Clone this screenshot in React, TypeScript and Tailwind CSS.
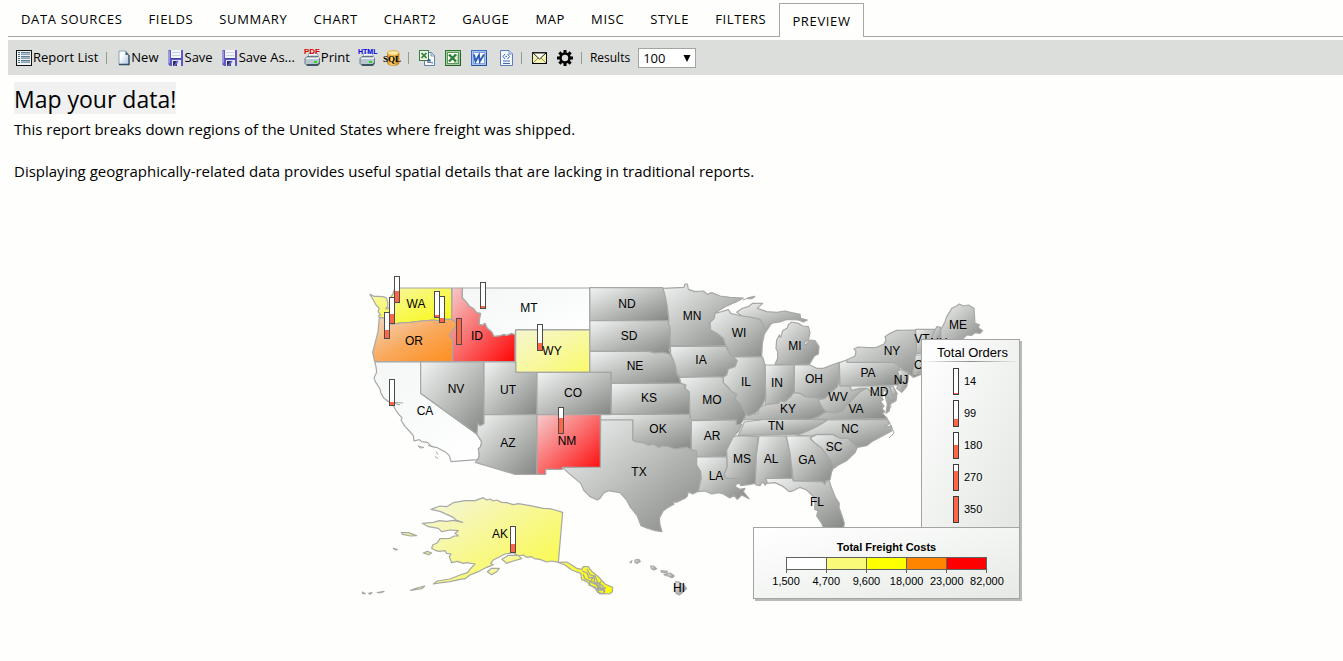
import React from "react";

const tabs = ["DATA SOURCES", "FIELDS", "SUMMARY", "CHART", "CHART2", "GAUGE", "MAP", "MISC", "STYLE", "FILTERS"];

type Shape = { id: string; d: string; fill?: string };

/* Each group of outlines is drawn on its own grid, three units to a pixel. */
const west: Shape[] = [
  { id: "WA", fill: "yellow", d: "M60,88 L72,94 L85,94 L98,95 L108,98 L112,106 L114,120 L108,132 L118,128 L126,112 L120,100 L128,88 L135,69 H305 V163 L282,163 L262,167 L250,165 L215,168 L180,172 L150,174 L125,178 L118,172 L112,160 L88,158 L86,152 L92,150 L84,140 L88,130 L78,120 L70,105Z" },
  { id: "OR", fill: "orange", d: "M88,158 L112,160 L118,172 L125,178 L150,174 L180,172 L215,168 L250,165 L262,167 L282,163 H305 L318,172 L320,182 L300,208 L300,214 L308,222 L307,290 H74 L68,262 L75,235 L84,200Z" },
  { id: "ID", fill: "red", d: "M306,69 H337 V98 L350,112 L357,122 L372,132 L380,143 L392,145 L388,166 L388,178 L397,180 L405,175 L412,190 L425,200 L432,214 L450,212 L462,208 L470,211 L485,205 L495,210 V290 H307 L308,222 L300,214 L300,208 L320,182 L318,172 L305,163Z" },
  { id: "MT", fill: "white", d: "M337,69 H719 V194 H497 L495,210 L485,205 L470,211 L462,208 L450,212 L432,214 L425,200 L412,190 L405,175 L397,180 L388,178 L388,166 L392,145 L380,143 L372,132 L357,122 L350,112 L337,98Z" },
  { id: "WY", fill: "paleYellow", d: "M497,195 H719 V322 H497Z" },
  { id: "CA", fill: "white", d: "M74,290 L212,291 V385 L381,508 L395,530 L392,545 L385,552 L388,572 L383,584 L303,590 L298,572 L285,560 L262,548 L245,545 L232,532 L215,530 L208,524 L192,528 L190,512 L178,498 L165,484 L153,465 L156,458 L148,450 L140,440 L132,425 L118,412 L102,400 L93,385 L90,372 L76,350 L72,338 L80,322 L78,305Z" },
  { id: "NV", d: "M212,291 H402 V476 L390,482 L383,476 L381,508 L212,385Z" },
  { id: "UT", d: "M402,291 H497 V322 H561 V449 H402Z" },
  { id: "CO", d: "M561,322 H783 V449 H561Z" },
  { id: "AZ", d: "M402,449 H561 V628 H495 L376,592 L383,584 L388,572 L385,552 L392,545 L395,530 L381,508 L383,476 L390,482 L402,476Z" },
  { id: "NM", fill: "red", d: "M561,449 H751 V606 L637,607 V613 H587 V628 H561Z" },
];

const middle: Shape[] = [
  { id: "ND", d: "M29,53 H248 L252,65 L258,90 L262,110 L267,152 H29Z" },
  { id: "SD", d: "M29,152 H267 L265,160 L270,170 V228 L267,240 L272,253 L250,247 L225,249 L205,244 H29Z" },
  { id: "NE", d: "M29,244 H205 L225,249 L250,247 L272,254 L280,270 L287,290 L290,310 L298,325 L303,340 H94 V307 H29Z" },
  { id: "KS", d: "M94,340 H303 L318,345 L313,352 L328,366 L330,433 H94Z" },
  { id: "OK", d: "M62,433 H330 V450 L334,480 V539 L320,532 L300,535 L285,537 L265,530 L248,528 L235,532 L220,522 L205,526 L190,518 L170,516 L158,510 V450 H62Z" },
  { id: "TX", d: "M62,450 H158 V510 L170,516 L190,518 L205,526 L220,522 L235,532 L248,528 L265,530 L285,537 L300,535 L320,532 L334,539 L350,543 V585 L362,605 L364,625 L360,640 L355,664 L338,672 L330,668 L325,665 L322,678 L315,685 L290,697 L280,695 L282,703 L265,712 L250,722 L238,745 L240,765 L246,785 L225,782 L200,774 L183,767 L172,738 L150,710 L140,690 L120,668 L85,662 L70,670 L60,685 L52,690 L30,680 L12,662 L2,640 L-12,628 L-30,613 L-53,592 L61,591Z" },
  { id: "MN", d: "M248,55 L312,52 L315,42 L322,42 L325,58 L345,65 L370,63 L382,73 L395,68 L420,78 L450,82 L490,84 L470,95 L440,108 L415,122 L405,130 L403,145 L390,158 L392,180 L410,190 L430,205 L438,227 H271 L270,170 L265,160 L267,152 L262,110 L258,90 L252,65Z" },
  { id: "WI", d: "M405,130 L425,125 L445,119 L452,130 L485,138 L515,142 L540,148 L550,165 L552,175 L542,192 L570,166 L553,192 L547,220 L545,260 L460,261 L448,252 L438,227 L430,205 L410,190 L392,180 L390,158 L403,145Z" },
  { id: "IA", d: "M271,229 H438 L448,250 L458,262 L472,272 L465,290 L445,297 L440,315 L430,322 L415,320 L300,323 L298,320 L290,310 L287,290 L280,270 L272,253Z" },
  { id: "MO", d: "M298,322 L415,320 L430,322 L430,338 L445,352 L455,365 L470,372 L465,388 L480,400 L492,420 L498,432 L490,450 L480,465 L468,463 L470,450 H334 L330,433 L328,366 L315,355 L318,345 L303,340Z" },
  { id: "IL", d: "M460,261 H548 L555,285 L557,380 L550,400 L535,420 L525,430 L505,437 L498,430 L480,400 L465,388 L470,372 L455,365 L445,352 L430,338 V322 L440,315 L445,297 L465,290 L472,272Z" },
  { id: "AR", d: "M334,452 L470,450 L468,463 L485,464 L475,485 L460,500 L450,520 L440,540 L442,560 L350,561 V543 L334,539Z" },
  { id: "LA", d: "M350,561 L440,560 L442,590 L432,615 L440,625 H480 L482,642 L470,640 L466,650 L480,658 L495,655 L490,665 L507,686 L485,675 L472,688 L462,676 L450,684 L430,672 L415,668 L395,672 L375,663 L355,665 L360,640 L364,625 L362,605 L350,585Z" },
  { id: "MS", d: "M475,497 L535,500 L528,560 L526,640 L510,643 L482,647 L480,625 H440 L432,615 L442,590 L440,540 L450,520 L460,500Z" },
];

const east: Shape[] = [
  { id: "MI-upper", d: "M-40,97 L-25,86 L-5,80 L8,70 L38,70 L22,85 L50,95 L80,97 L105,93 L125,98 L150,103 L152,115 L172,120 L160,126 L145,120 L110,118 L90,126 L70,128 L58,135 L45,152 L36,128 L5,114 L-25,108Z" },
  { id: "Isle-Royale", d: "M-8,55 L2,52 L14,49 L5,56Z" },
  { id: "MI", d: "M75,253 L83,235 V215 L78,205 L80,180 L88,165 L92,172 L98,152 L112,144 L115,134 L125,126 L145,130 L158,138 L175,140 L180,158 L175,180 L163,188 L165,197 L180,180 L195,182 L207,200 L205,222 L193,228 L183,245 L178,253Z" },
  { id: "IN", d: "M45,255 H133 V340 L122,350 L105,365 L85,370 L45,375 L47,355Z" },
  { id: "OH", d: "M133,255 H180 L200,265 L220,265 L245,255 L268,247 V300 L262,320 L240,340 L225,355 H205 L185,352 L165,350 L150,340 H133Z" },
  { id: "KY", d: "M-18,420 L-15,408 L0,400 L22,402 L28,382 L45,375 L62,372 L85,370 L92,362 L105,365 L122,350 L130,338 L150,340 L165,350 L185,352 L205,355 L210,375 L228,395 L205,410 L190,417Z" },
  { id: "VA", d: "M180,418 L205,410 L228,395 L255,398 L278,392 L290,375 L310,355 L330,335 L350,325 L370,340 L385,345 L400,358 L392,365 L402,378 L396,385 L404,395 L398,400 L412,416Z" },
  { id: "WV", d: "M268,300 L270,318 H300 L305,332 L330,322 L350,322 L330,335 L310,355 L290,375 L278,392 L255,398 L228,395 L215,380 L205,360 L225,355 L240,340 L262,320Z" },
  { id: "PA", d: "M268,248 L290,240 L292,247 H430 L440,250 L450,262 L443,275 L447,290 L455,300 L445,315 L270,318Z" },
  { id: "MD", d: "M300,318 H420 L428,350 L440,347 L438,362 L420,372 L418,392 L408,400 L412,372 L405,345 L410,335 L400,330 L398,350 L385,345 L370,340 L350,325 L330,325 L305,332Z" },
  { id: "DE", d: "M420,318 L430,320 L442,342 L428,350Z" },
  { id: "NY", d: "M292,247 L290,240 L315,228 L318,215 L312,207 L325,201 L355,203 L380,202 L402,192 L408,180 L405,170 L420,160 L440,151 L497,150 L500,210 L496,240 L492,275 L486,285 L535,274 L490,292 L475,280 L450,262 L440,250 L430,247Z" },
  { id: "NJ", d: "M450,268 L475,276 V295 L470,320 L455,337 L440,325 L445,315 L455,300 L447,290 L443,275Z" },
  { id: "VT", d: "M497,148 H557 L545,180 L540,220 H500Z" },
  { id: "CT", d: "M496,225 H545 V272 L488,280 L492,260Z" },
  { id: "NH", d: "M555,150 L561,140 L572,142 L573,185 L540,190Z" },
  { id: "ME", d: "M572,150 L585,125 L590,110 L600,95 L605,85 L620,78 L628,72 L640,78 L655,75 L672,85 L675,130 L688,134 L685,143 L698,152 L690,160 L675,158 L665,166 L650,165 L630,185 H573Z" },
];

const south: Shape[] = [
  { id: "TN", d: "M145,106 L155,85 L163,66 L210,60 V57 L412,59 L400,68 L380,80 L355,92 L330,104Z" },
  { id: "NC", d: "M320,106 L355,92 L380,80 L400,68 L412,60 L592,58 L600,70 L585,78 L602,80 L604,94 L588,102 L570,112 L545,125 L530,137 L502,142 L473,114 L455,116 L440,110 L430,103 L380,103 L365,108Z" },
  { id: "SC", d: "M360,114 L380,104 H430 L440,110 L455,116 L473,114 L502,142 L495,158 L470,182 L445,195 L432,205 L410,165 L395,145 L375,130Z" },
  { id: "AL", d: "M207,108 H289 L300,160 L305,200 L307,235 H228 L232,248 L225,255 L218,245 L210,257 L198,255 L196,250 L198,170Z" },
  { id: "GA", d: "M289,108 H365 L360,115 L375,130 L395,145 L410,165 L425,185 L432,200 L425,215 L420,240 L408,242 L405,252 L398,245 L310,241 L305,200 L300,160Z" },
  { id: "FL", d: "M228,235 H307 L310,243 L398,246 L405,254 L408,242 L418,243 L425,265 L436,292 L448,310 L447,322 L457,350 L463,370 L460,388 H402 L395,370 L380,348 L384,332 L374,328 L375,310 L370,290 L350,270 L330,262 L310,272 L298,275 L280,260 L255,248 L232,250Z" },
];

const alaska: Shape[] = [
  { id: "AK", fill: "alaska", d: "M375,62 L400,53 L410,60 L420,57 L430,63 L440,60 L455,67 L470,68 L490,74 L505,71 L540,77 L580,85 L600,86 L615,90 L638,97 L625,247 L605,243 L590,246 L570,238 L552,236 L545,230 L530,232 L520,225 L505,228 L490,218 L465,222 L440,235 L430,240 L422,250 L430,254 L410,262 L385,275 L360,285 L345,296 L330,298 L300,305 L275,308 L250,312 L262,303 L300,297 L330,285 L352,278 L365,262 L375,252 L350,248 L340,250 L322,244 L305,248 L298,230 L303,222 L290,220 L285,212 L268,214 L258,212 L245,205 L248,195 L262,188 L270,176 L300,175 L312,168 L325,168 L315,160 L325,152 L300,150 L275,155 L265,145 L235,140 L217,130 L250,127 L268,122 L290,124 L310,121 L338,127 L318,120 L310,112 L290,103 L270,94 L243,88 L270,78 L290,80 L310,68 L345,62Z" },
  { id: "AK-kenai", fill: "alaska", d: "M465,245 L456,238 L475,226 L505,226 L515,236 L490,243 L470,250Z" },
  { id: "AK-kodiak", fill: "alaska", d: "M412,275 L425,265 L448,265 L440,275 L425,284Z" },
  { id: "AK-nunivak", fill: "alaska", d: "M220,219 L232,214 L245,219 L236,224Z" },
  { id: "AK-lawrence", fill: "alaska", d: "M154,158 L175,158 L200,167 L182,168 L158,163Z" },
  { id: "AK-unimak", fill: "alaska", d: "M182,331 L200,324 L224,318 L216,326 L200,328Z" },
  { id: "AK-aleut1", fill: "alaska", d: "M37,336 L46,341 L38,341Z" },
  { id: "AK-aleut2", fill: "alaska", d: "M56,340 L66,338 L60,343Z" },
  { id: "AK-aleut3", fill: "alaska", d: "M82,338 L102,334 L92,338Z" },
  { id: "AK-matthew", fill: "alaska", d: "M130,205 L142,209 L136,210Z" },
  { id: "AK-panhandle", fill: "brightYellow", d: "M625,247 L650,246 L664,254 L680,265 L695,268 L700,260 L715,260 L725,274 L745,290 L765,312 L788,322 L787,335 L778,342 L765,340 L750,342 L735,325 L722,316 L710,305 L695,298 L692,280 L665,270 L645,255Z" },
  { id: "HI-niihau", d: "M840,248 L846,242 L844,248Z" },
  { id: "HI-kauai", d: "M855,240 L866,238 L871,244 L862,250 L855,247Z" },
  { id: "HI-oahu", d: "M902,258 L910,258 L920,266 L912,270 L904,266Z" },
  { id: "HI-molokai", d: "M933,272 L952,274 L948,278 L935,277Z" },
  { id: "HI-lanai", d: "M942,283 L949,282 L948,288Z" },
  { id: "HI-maui", d: "M950,279 L962,280 L973,288 L966,293 L954,288Z" },
  { id: "HI", d: "M978,304 L990,308 L1002,315 L1010,326 L1000,335 L988,345 L978,340 L974,322Z" },
];

const layers = [
  { key: "south", t: "translate(690 400) scale(.33333)", shapes: south },
  { key: "east", t: "translate(750 280) scale(.33333)", shapes: east },
  { key: "middle", t: "translate(580 270) scale(.33333)", shapes: middle },
  { key: "west", t: "translate(350 265) scale(.33333)", shapes: west },
  { key: "alaska", t: "translate(350 480) scale(.33333)", shapes: alaska },
];

const gradients: [string, string, string, string][] = [
  ["gray", "#f2f4f3", "#bcbebc", "#848684"],
  ["white", "#f4f7f5", "#f9fbfa", "#ffffff"],
  ["yellow", "#f6f7b4", "#f8f860", "#f9f90a"],
  ["paleYellow", "#f5f6cf", "#f8f8a2", "#f9f96a"],
  ["alaska", "#f4f5e0", "#f8f88e", "#fafa3c"],
  ["brightYellow", "#fafa50", "#fcfc20", "#ffff00"],
  ["orange", "#f3d5bd", "#f9a95c", "#ff8c1a"],
  ["red", "#f6cccc", "#fa6a6a", "#ff0505"],
];

const labels: [string, number, number][] = [
  ["WA", 416, 308], ["OR", 414, 345], ["ID", 477, 340], ["MT", 529, 312], ["WY", 552, 355], ["CA", 425, 415],
  ["NV", 456, 393], ["UT", 508, 394], ["CO", 573, 397], ["AZ", 508, 447], ["NM", 567, 445], ["ND", 627, 308],
  ["SD", 629, 340], ["NE", 635, 370], ["KS", 649, 402], ["OK", 658, 433], ["TX", 639, 476], ["MN", 692, 320],
  ["IA", 701, 364], ["WI", 739, 337], ["IL", 746, 386], ["MO", 712, 404], ["AR", 712, 440], ["LA", 716, 480],
  ["MS", 742, 463], ["AL", 771, 463], ["GA", 807, 464], ["FL", 817, 506], ["SC", 834, 451], ["NC", 850, 433],
  ["TN", 776, 430], ["KY", 788, 413], ["VA", 856, 413], ["WV", 838, 401], ["MD", 879, 396], ["NJ", 901, 384],
  ["PA", 868, 377], ["NY", 892, 355], ["VT", 922, 343], ["CT", 922, 369], ["NH", 939, 347], ["ME", 958, 329],
  ["OH", 814, 383], ["IN", 777, 387], ["MI", 795, 350], ["AK", 500, 538], ["HI", 679, 592],
];

const gauges: [number, number, number][] = [
  [395, 277, 11], [390, 298, 9], [385, 313, 8], [435, 292, 2], [440, 297, 4], [457, 319, 25],
  [481, 283, 2], [538, 325, 7], [390, 380, 3], [559, 408, 15], [511, 527, 8],
];

function UsMap() {
  return (
    <svg viewBox="361 270 661 330" className="block w-full" role="img" aria-label="Freight by state">
      <defs>
        {gradients.map(([id, a, b, c]) => (
          <linearGradient key={id} id={id} x1="0" y1="0" x2="1" y2="1">
            <stop offset="0" stopColor={a} />
            <stop offset=".5" stopColor={b} />
            <stop offset="1" stopColor={c} />
          </linearGradient>
        ))}
      </defs>
      {layers.map((l) => (
        <g key={l.key} transform={l.t} stroke="#a6a8a6" strokeWidth="3.600" strokeLinejoin="round">
          {l.shapes.map((s) => (
            <path key={s.id} d={s.d} fill={`url(#${s.fill ?? "gray"})`} />
          ))}
        </g>
      ))}
      <g fill="none" stroke="#a6a8a6" strokeWidth="1">
        <path d="M393,402.500 L403,403 M394,403 L400,405 M418,446 l6,1.500 -4,0.500z M428,445.500 l5,1 M436,451.500 l2,3 M435,456.500 l3,2" />
        <path d="M743,300 l8,-3 M748,299 l7,-2 M888,396 l3,10 -3,6 M890,424 l4,9 -5,5 M891,425 l2,6" />
        <path strokeWidth="1.300" d="M582,571 l5,2 2,5 5,-1 1,6 5,0 0,5 6,0 M583,574 l2,5 5,2 -1,4 6,2 3,6 M587,569 l3,6 5,1 3,7 5,3 2,6 M590,582 l7,3 1,7 5,2 M594,576 l-3,5 6,2 2,7 6,-1 M601,581 l-3,6 6,4 -1,3" />
      </g>
      {gauges.map(([x, y, level]) => (
        <g key={`${x}-${y}`} shapeRendering="crispEdges">
          <rect x={x - 1} y={y - 1} width="6" height="27" fill="#4c4c4c" />
          <rect x={x} y={y} width="4" height="25" fill="#fff" />
          <rect x={x} y={y + 25 - level} width="4" height={level} fill="#ff6647" />
        </g>
      ))}
      <g fontFamily="Liberation Sans, Arial, sans-serif" fontSize="12" textAnchor="middle" fill="#000">
        {labels.map(([t, x, y]) => (
          <text key={t} x={x} y={y}>{t}</text>
        ))}
      </g>
    </svg>
  );
}

const orders = [
  { label: "14", level: "h-px" },
  { label: "99", level: "h-[7px]" },
  { label: "180", level: "h-[13px]" },
  { label: "270", level: "h-[19px]" },
  { label: "350", level: "h-full" },
];

function Sep() {
  return <span className="h-3 w-px bg-[#8f9d8f]" />;
}

function ListIcon() {
  return (
    <svg width="16" height="16" viewBox="0 0 16 16" shapeRendering="crispEdges">
      <rect width="16" height="16" fill="#111" />
      <rect x="1" y="1" width="14" height="14" fill="#eef2f4" />
      {[2, 4, 6, 8, 10, 12].map((y) => (
        <g key={y}>
          <rect x="2" y={y} width="2" height="1" fill="#4d6f86" />
          <rect x="5" y={y} width="9" height="1" fill={y % 4 ? "#5f8094" : "#8ba3b2"} />
        </g>
      ))}
      <rect x="5" y="3" width="9" height="1" fill="#b4c3cd" />
      <rect x="5" y="7" width="9" height="1" fill="#a5b6c2" />
      <rect x="5" y="11" width="9" height="1" fill="#a5b6c2" />
    </svg>
  );
}

function NewIcon() {
  return (
    <svg width="12" height="16" viewBox="0 0 12 16">
      <defs>
        <linearGradient id="sheet" x1="0" y1="0" x2="1" y2="1">
          <stop offset=".3" stopColor="#fff" />
          <stop offset="1" stopColor="#a9c3dd" />
        </linearGradient>
      </defs>
      <path d="M1 1h6.500l3.500 4v9.500H1z" fill="url(#sheet)" stroke="#8ba3ba" />
      <path d="M11 5v9.500H1" fill="none" stroke="#2e4d68" strokeWidth="1.300" />
      <path d="M7.500 1v4H11z" fill="#3f5f7a" />
    </svg>
  );
}

function SaveIcon() {
  return (
    <svg width="16" height="16" viewBox="0 0 16 16">
      <path d="M.5 0H15v16H2L.5 14.500z" fill="#5c58c6" />
      <path d="M1.500 1v12" stroke="#9694e8" />
      <rect x="3" y="0" width="10" height="8" fill="#f3f5f9" />
      <path d="M4 2.500h8M4 5.500h8" stroke="#cdd3de" />
      <path d="M3 8.500h10" stroke="#4642a4" />
      <rect x="4" y="10" width="9" height="6" fill="#e3e7ef" />
      <path d="M5 11h4v5H5z" fill="#2e2e5e" />
      <path d="M9 10.500l1.500 1-3 4.500H5.500z" fill="#6a66cc" />
    </svg>
  );
}

function PrintIcon({ tag }: { tag: string }) {
  const pdf = tag === "PDF";
  return (
    <svg width="16" height="16" viewBox="0 0 16 16" className="overflow-visible">
      <path d="M5 3h8l2 5H4z" fill="#f7fafd" stroke="#8097aa" strokeWidth=".8" />
      <path d="M6 6h7" stroke="#9fb3c4" />
      <path d="M1 8.500l2-2h11l1.500 2v5L14 15.500H3l-2-2z" fill="#b9c6cf" stroke="#5d6f7b" strokeWidth=".9" />
      <path d="M2 8.500h12l1-1.500" fill="none" stroke="#eef4f8" strokeWidth="1.200" />
      <path d="M2.500 14h11l2-2v2l-2 2H3z" fill="#3f5563" />
      <rect x="10" y="11" width="3" height="2" fill="#1fe01f" />
      <text x={pdf ? 0 : -1} y="4" fontFamily="Liberation Sans, sans-serif" fontWeight="700" fontSize={pdf ? 8 : 7} fill={pdf ? "#dd0000" : "#0000e6"}>{tag}</text>
    </svg>
  );
}

function SqlIcon() {
  return (
    <svg width="16" height="16" viewBox="0 0 16 16" className="overflow-visible">
      <defs>
        <linearGradient id="drum" x1="0" x2="1">
          <stop offset="0" stopColor="#d98b1a" />
          <stop offset=".4" stopColor="#ffe27a" />
          <stop offset="1" stopColor="#c97a10" />
        </linearGradient>
      </defs>
      <path d="M3.500 3v10c0 3.300 11.500 3.300 11.500 0V3z" fill="url(#drum)" stroke="#b9790f" strokeWidth=".6" />
      <ellipse cx="9.200" cy="3" rx="5.700" ry="2.400" fill="#ffe9a0" stroke="#d8961f" strokeWidth=".7" />
      <text x="-1" y="12" fontFamily="Liberation Serif, serif" fontWeight="700" fontSize="9" fill="#000">SQL</text>
    </svg>
  );
}

function ExcelIcon() {
  return (
    <svg width="16" height="16" viewBox="0 0 16 16">
      <rect x=".5" y=".5" width="15" height="15" fill="#a9cfa4" stroke="#2f7434" />
      <rect x="2.500" y="2.500" width="11" height="11" fill="#fff" stroke="#5b9a57" />
      <path d="M9 4.500h3.500v8H9" fill="#e5f0e2" stroke="#8bb784" strokeWidth=".6" />
      <path d="M4 4.500l7 7M11 4.500l-7 7" stroke="#2f7d35" strokeWidth="2.400" />
      <path d="M1 15.500h14.500V3" fill="none" stroke="#245d29" />
    </svg>
  );
}

function CsvIcon() {
  return (
    <svg width="16" height="16" viewBox="0 0 16 16">
      <path d="M5.500 2.500h7l3 3v10h-10z" fill="#fff" stroke="#5e7fb5" />
      <path d="M12 2.500v3.500h3.500" fill="#dce7f6" stroke="#5e7fb5" strokeWidth=".8" />
      <rect x=".5" y=".5" width="9" height="10" fill="#eaf4e8" stroke="#3b8040" />
      <path d="M2.500 3l5 5M7.500 3l-5 5" stroke="#2f7d35" strokeWidth="1.700" />
      <text x="8" y="13" fontFamily="Liberation Sans, sans-serif" fontWeight="700" fontSize="7" fill="#2e4f94">a,</text>
    </svg>
  );
}

function WordIcon() {
  return (
    <svg width="16" height="16" viewBox="0 0 16 16">
      <rect x=".5" y=".5" width="15" height="15" fill="#a8c4f2" stroke="#3f6cc0" />
      <rect x="2.500" y="2.500" width="11" height="11" fill="#fff" stroke="#7fa3e0" />
      <path d="M3 4.500l1.500 7L8 5l.8 6.500L13 4.500" fill="none" stroke="#2c5cb8" strokeWidth="1.900" />
      <path d="M1 15.500h14.500V3" fill="none" stroke="#26509e" />
    </svg>
  );
}

function XmlIcon() {
  return (
    <svg width="16" height="16" viewBox="-3 0 16 16">
      <path d="M.5.5h8.500l3.500 3.500v11.500H.5z" fill="#f3f8ff" stroke="#5d7db8" />
      <path d="M9 .5V4h3.500" fill="#cfdef4" stroke="#5d7db8" strokeWidth=".8" />
      <path d="M5 4L3 6.500 5 9M7.500 4l2 2.500-2 2.500M3 11h7M3 13.500h7" fill="none" stroke="#4468ae" />
      <circle cx="6.200" cy="6.500" r=".8" fill="#4468ae" />
    </svg>
  );
}

function MailIcon() {
  return (
    <svg width="15" height="12" viewBox="0 0 15 12">
      <rect x=".5" y=".5" width="14" height="11" fill="#f4f3b0" stroke="#222" />
      <path d="M1 11l5-5M14 11L9 6" stroke="#8b8a58" />
      <path d="M1 1h13L7.500 7z" fill="#fffff0" stroke="#222" />
      <path d="M0 11.500h15M14.500 1v11" stroke="#000" />
    </svg>
  );
}

function GearIcon() {
  return (
    <svg width="16" height="16" viewBox="0 0 16 16">
      <circle cx="8" cy="8" r="4.500" fill="none" stroke="#000" strokeWidth="2.600" />
      {[0, 45, 90, 135, 180, 225, 270, 315].map((a) => (
        <rect key={a} x="6.500" y="0" width="3" height="3.200" fill="#000" transform={`rotate(${a} 8 8)`} />
      ))}
    </svg>
  );
}

function Tool({ label, title, children }: { label?: string; title: string; children: React.ReactNode }) {
  return (
    <button type="button" aria-label={title} className="flex shrink-0 items-center gap-px whitespace-nowrap">
      {children}
      {label && <span>{label}</span>}
    </button>
  );
}

export default function App() {
  return (
    <div className="min-h-screen bg-[#fefefd] font-['Open_Sans','Noto_Sans',sans-serif] text-black">
      <nav className="ml-2 flex h-[37px] items-end border-b border-[#a5a7a5] pt-[3px] text-[13px] tracking-wider">
        {tabs.map((t) => (
          <a key={t} href="#" className="flex h-[34px] items-center px-[13px] pt-0.5 whitespace-nowrap">{t}</a>
        ))}
        <a href="#" aria-current="page" className="-mb-px flex h-[34px] items-center border border-b-0 border-[#a5a7a5] bg-[#fefefd] px-3 pt-0.5 whitespace-nowrap">PREVIEW</a>
      </nav>

      <div className="mt-[3px] ml-2 flex h-[35px] items-center bg-[#dcdedc] pt-px pl-2 text-[13px]">
        <div className="flex items-center gap-2">
          <Tool title="Report List" label="Report List"><ListIcon /></Tool>
          <Sep />
        </div>
        <div className="ml-[11px] flex items-center gap-[9px]">
          <Tool title="New" label="New"><NewIcon /></Tool>
          <Tool title="Save" label="Save"><SaveIcon /></Tool>
          <Tool title="Save As" label="Save As..."><SaveIcon /></Tool>
          <Tool title="Print PDF" label="Print"><PrintIcon tag="PDF" /></Tool>
          <Tool title="Print HTML"><PrintIcon tag="HTML" /></Tool>
          <Tool title="SQL"><SqlIcon /></Tool>
        </div>
        <div className="ml-2 flex items-center gap-2.5">
          <Sep />
          <Tool title="Export CSV"><CsvIcon /></Tool>
          <Tool title="Export Excel"><ExcelIcon /></Tool>
          <Tool title="Export Word"><WordIcon /></Tool>
          <Tool title="Export XML"><XmlIcon /></Tool>
        </div>
        <div className="ml-2 flex items-center gap-2.5">
          <Sep />
          <Tool title="Email"><MailIcon /></Tool>
          <Tool title="Settings"><GearIcon /></Tool>
        </div>
        <div className="ml-2 flex items-center gap-2">
          <Sep />
          <label htmlFor="results" className="text-[12px]">Results</label>
          <div className="relative flex items-center">
            <select id="results" defaultValue="100" className="h-5 w-[58px] appearance-none border border-[#a3a5a3] bg-white pl-1 text-[13px] leading-none">
              <option>100</option>
              <option>1000</option>
            </select>
            <svg width="8" height="7" viewBox="0 0 8 7" className="pointer-events-none absolute right-[5px]"><path d="M.500 0h7L4 7z" /></svg>
          </div>
        </div>
      </div>

      <main className="pt-[7px]">
        <div className="pl-3.5">
          <h1 className="w-fit bg-[#f0f1f0] pt-0.5 text-[23px] leading-[30px]">Map your data!</h1>
          <p className="pt-[5px] text-[15px] leading-[21px]">This report breaks down regions of the United States where freight was shipped.</p>
          <p className="pt-[21px] text-[15px] leading-[21px]">Displaying geographically-related data provides useful spatial details that are lacking in traditional reports.</p>
        </div>

        <div className="mt-[88px] flex justify-center pl-10 font-['Liberation_Sans',Arial,sans-serif]">
          <div className="relative w-full max-w-[661px]">
            <UsMap />
            <section className="absolute top-[69px] right-0.5 h-[193px] w-[99px] border border-[#a3a5a3] bg-linear-to-br from-white via-[#f1f3f1] to-[#e3e6e2] shadow-[2px_2px_0_#b9bbb9]">
              <h2 className="pt-[5px] pl-1 text-center text-[13px] leading-4">Total Orders</h2>
              <div className="h-px bg-linear-to-r from-transparent via-[#8c8e8c] to-transparent" />
              <ul className="flex flex-col gap-[5px] pt-[6px] pl-[31px] text-[11px]">
                {orders.map((o) => (
                  <li key={o.label} className="flex h-[27px] items-center gap-[5px]">
                    <span className="flex h-full w-1.5 flex-col justify-end border border-[#3c3c3c] bg-white">
                      <span className={`${o.level} bg-[#ff6647]`} />
                    </span>
                    {o.label}
                  </li>
                ))}
              </ul>
            </section>
            <section className="absolute top-[257px] right-0.5 h-[72px] w-[267px] border border-[#a3a5a3] bg-linear-to-br from-white via-[#f3f5f3] to-[#e6e9e5] shadow-[2px_2px_0_#b9bbb9]">
              <h2 className="pt-[11px] text-center text-[11px] leading-4 font-bold">Total Freight Costs</h2>
              <div className="mx-8 mt-0.5 flex h-[13px] border border-[#606260]">
                <span className="flex-1 bg-white" />
                <span className="flex-1 border-l border-[#606260] bg-[#fafa78]" />
                <span className="flex-1 border-l border-[#606260] bg-[#ffff00]" />
                <span className="flex-1 border-l border-[#606260] bg-[#ff8400]" />
                <span className="flex-1 border-l border-[#606260] bg-[#ff0000]" />
              </div>
              <div className="mx-3 flex text-center text-[11px] leading-4">
                {["1,500", "4,700", "9,600", "18,000", "23,000", "82,000"].map((v) => (
                  <span key={v} className="flex flex-1 flex-col items-center">
                    <span className="h-[3px] w-px bg-[#606260]" />
                    {v}
                  </span>
                ))}
              </div>
            </section>
          </div>
        </div>
      </main>
    </div>
  );
}
